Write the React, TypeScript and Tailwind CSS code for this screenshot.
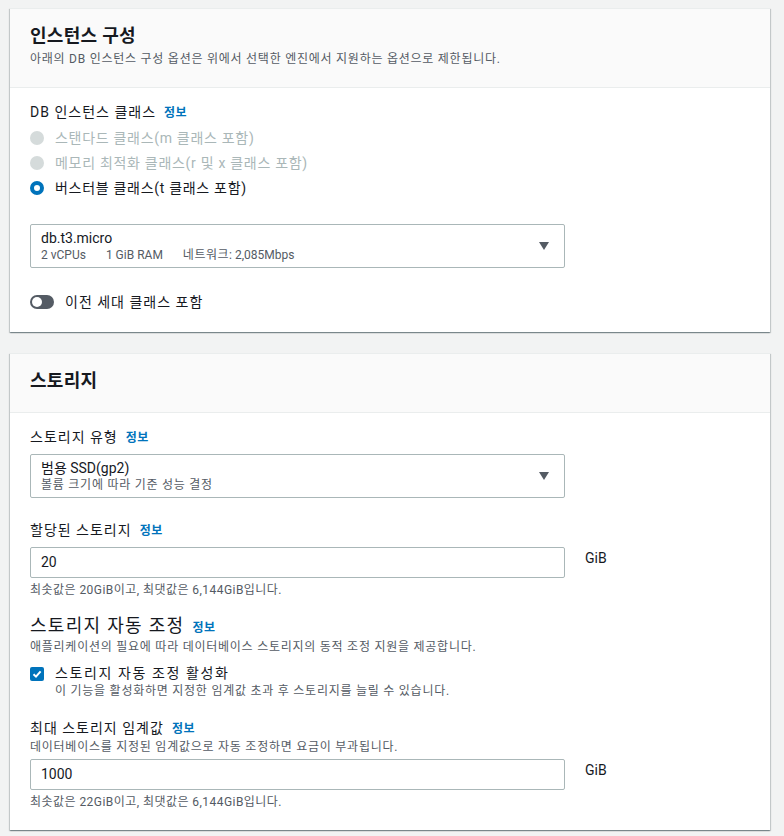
import React from 'react';

const font = { fontFamily: 'Roboto, "Noto Sans CJK KR", sans-serif' };

function Info() {
  return <span className="ml-[8px] text-[12px] font-bold tracking-[0.5px] text-[#0073bb]">정보</span>;
}

function Card({ title, desc, children }: { title: string; desc?: string; children: React.ReactNode }) {
  return (
    <div className="w-[760px] bg-white border-t border-[#eaeded] shadow-[0_1px_1px_0_rgba(0,28,36,0.3),1px_1px_1px_0_rgba(0,28,36,0.15),-1px_1px_1px_0_rgba(0,28,36,0.15)]">
      <div className="bg-[#fafafa] border-b border-[#eaeded] px-[20px] pt-[16px] pb-[20px]">
        <h2 className="text-[18px] leading-[22px] font-bold tracking-[0.3px] text-[#16191f]">{title}</h2>
        {desc && <p className="mt-[4px] text-[12px] leading-[16px] tracking-[0.75px] text-[#545b64]">{desc}</p>}
      </div>
      <div className="px-[20px] pt-[14px] pb-[20px]">{children}</div>
    </div>
  );
}

function Radio({ label, checked, disabled }: { label: string; checked?: boolean; disabled?: boolean }) {
  return (
    <div className="flex items-center h-[25px]">
      {checked ? (
        <span className="w-[14px] h-[14px] rounded-full border-[4px] border-[#0073bb] bg-white" />
      ) : (
        <span className="w-[14px] h-[14px] rounded-full bg-[#d5dbdb]" />
      )}
      <span className={`ml-[11px] text-[14px] leading-[20px] tracking-[0.7px] ${disabled ? 'text-[#aab7b8]' : 'text-[#16191f]'}`}>{label}</span>
    </div>
  );
}

function Arrow() {
  return (
    <svg width="12" height="10" viewBox="0 0 12 10" className="mr-[14px]">
      <path d="M1 1h10L6 9z" fill="#545b64" />
    </svg>
  );
}

function Select({ value, sub }: { value: string; sub: React.ReactNode }) {
  return (
    <div className="w-[535px] h-[44px] border border-[#aab7b8] rounded-[2px] flex items-center justify-between pl-[10px]">
      <div>
        <div className="text-[14px] leading-[18px] text-[#16191f]">{value}</div>
        <div className="text-[12px] leading-[16px] text-[#545b64]">{sub}</div>
      </div>
      <Arrow />
    </div>
  );
}

function NumberInput({ value }: { value: string }) {
  return (
    <div className="flex items-start">
      <div className="w-[535px] h-[31px] border border-[#aab7b8] rounded-[2px] flex items-center pl-[10px] text-[14px] text-[#16191f]">
        {value}
      </div>
      <span className="ml-[20px] mt-[1px] text-[14px] leading-[20px] text-[#16191f]">GiB</span>
    </div>
  );
}

function Label({ text, className = '' }: { text: string; className?: string }) {
  return (
    <div className={`text-[14px] leading-[20px] tracking-[1px] text-[#16191f] ${className}`}>
      {text}
      <Info />
    </div>
  );
}

export default function App() {
  return (
    <div className="min-h-screen bg-[#f2f3f3] pt-[8px] pl-[10px] pb-[8px]" style={font}>
      <div className="flex flex-col gap-[21px]">
        <Card title="인스턴스 구성" desc="아래의 DB 인스턴스 구성 옵션은 위에서 선택한 엔진에서 지원하는 옵션으로 제한됩니다.">
          <Label text="DB 인스턴스 클래스" />
          <div className="mt-[2px]">
            <Radio label="스탠다드 클래스(m 클래스 포함)" disabled />
            <Radio label="메모리 최적화 클래스(r 및 x 클래스 포함)" disabled />
            <Radio label="버스터블 클래스(t 클래스 포함)" checked />
          </div>
          <div className="mt-[24px]">
            <Select
              value="db.t3.micro"
              sub={
                <span className="flex gap-[20px]">
                  <span>2 vCPUs</span>
                  <span>1 GiB RAM</span>
                  <span>
                    <span className="tracking-[0.5px]">네트워크</span>: 2,085Mbps
                  </span>
                </span>
              }
            />
          </div>
          <div className="mt-[24px] flex items-center h-[20px]">
            <span className="w-[24px] h-[14px] rounded-full bg-[#545b64] flex items-center pl-[2px]">
              <span className="w-[10px] h-[10px] rounded-full bg-white" />
            </span>
            <span className="ml-[11px] text-[14px] leading-[20px] tracking-[1px] text-[#16191f]">이전 세대 클래스 포함</span>
          </div>
        </Card>

        <Card title="스토리지">
          <Label text="스토리지 유형" />
          <div className="mt-[6px]">
            <Select value="범용 SSD(gp2)" sub={<span className="tracking-[0.75px]">볼륨 크기에 따라 기준 성능 결정</span>} />
          </div>

          <Label text="할당된 스토리지" className="mt-[22px]" />
          <div className="mt-[6px]">
            <NumberInput value="20" />
          </div>
          <p className="mt-[4px] text-[12px] leading-[16px] tracking-[0.45px] text-[#545b64]">최솟값은 20GiB이고, 최댓값은 6,144GiB입니다.</p>

          <div className="mt-[17px] text-[18px] leading-[22px] tracking-[1.3px] text-[#16191f]">
            스토리지 자동 조정<Info />
          </div>
          <p className="text-[12px] leading-[16px] tracking-[0.75px] text-[#545b64]">애플리케이션의 필요에 따라 데이터베이스 스토리지의 동적 조정 지원을 제공합니다.</p>
          <div className="mt-[8px] flex items-start">
            <span className="mt-[4px] w-[14px] h-[14px] rounded-[2px] bg-[#0073bb] flex items-center justify-center">
              <svg width="10" height="10" viewBox="0 0 10 10">
                <path d="M1.5 5.2 4 7.6 8.6 2.4" fill="none" stroke="white" strokeWidth="2" />
              </svg>
            </span>
            <div className="ml-[11px]">
              <div className="text-[14px] leading-[20px] tracking-[1.6px] text-[#16191f]">스토리지 자동 조정 활성화</div>
              <div className="text-[12px] leading-[16px] tracking-[0.75px] text-[#545b64]">이 기능을 활성화하면 지정한 임계값 초과 후 스토리지를 늘릴 수 있습니다.</div>
            </div>
          </div>

          <Label text="최대 스토리지 임계값" className="mt-[19px]" />
          <p className="text-[12px] leading-[16px] tracking-[0.75px] text-[#545b64]">데이터베이스를 지정된 임계값으로 자동 조정하면 요금이 부과됩니다.</p>
          <div className="mt-[4px]">
            <NumberInput value="1000" />
          </div>
          <p className="mt-[4px] text-[12px] leading-[16px] tracking-[0.45px] text-[#545b64]">최솟값은 22GiB이고, 최댓값은 6,144GiB입니다.</p>
        </Card>
      </div>
    </div>
  );
}
